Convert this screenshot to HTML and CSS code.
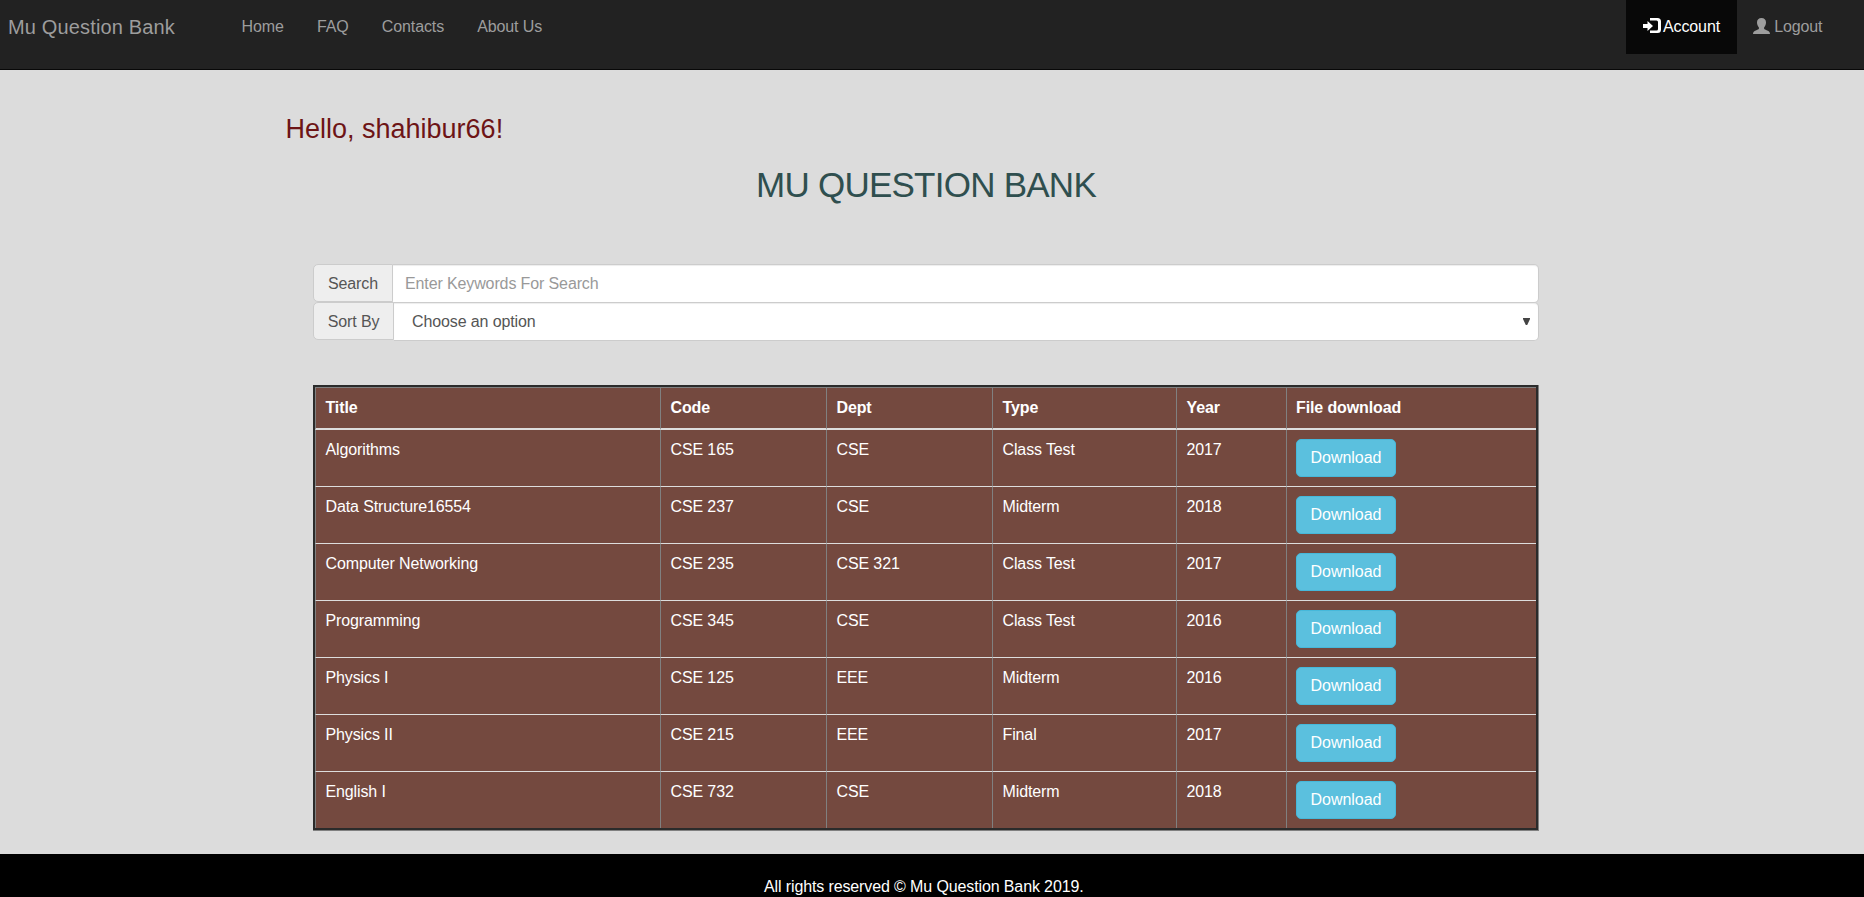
FILE: index.html
```html
<!DOCTYPE html>
<html lang="en">
<head>
<meta charset="utf-8">
<title>Mu Question Bank</title>
<link rel="stylesheet" href="styles.css">
</head>
<body>
<nav class="navbar">
  <a class="brand">Mu Question Bank</a>
  <ul class="menu">
    <li>Home</li><li>FAQ</li><li>Contacts</li><li>About Us</li>
  </ul>
  <ul class="menu menu-right">
    <li class="active"><svg class="icon-login" width="18" height="16" viewBox="0 0 18 16"><path fill="currentColor" d="M0 6h4.500V3L10 8l-5.500 5V10H0zM7 0h7.500a3.500 3.500 0 0 1 3.500 3.500v8a3.500 3.500 0 0 1-3.500 3.500H7v-2.500h6.500a1.500 1.500 0 0 0 1.500-1.500v-7A1.500 1.500 0 0 0 13.500 2.500H7z"/></svg>Account</li>
    <li><svg class="icon-user" width="17" height="16" viewBox="0 0 17 16"><path fill="currentColor" d="M8.500 0C11.300 0 13 1.700 13 4.200c0 1.900-.6 3.900-1.900 5.200v1.400c.3.700 1.500 1 3.100 1.700 1.700.7 2.800 1.400 2.800 3.500H0c0-2.100 1.100-2.800 2.800-3.500 1.600-.7 2.800-1 3.100-1.700V9.400C4.600 8.100 4 6.100 4 4.200 4 1.700 5.700 0 8.500 0z"/></svg>Logout</li>
  </ul>
</nav>
<main class="content">
  <h3 class="hello">Hello, shahibur66!</h3>
  <h1 class="title">MU QUESTION BANK</h1>
  <div class="group">
    <span class="addon">Search</span>
    <div class="control placeholder">Enter Keywords For Search</div>
  </div>
  <div class="group group-sort">
    <span class="addon">Sort By</span>
    <div class="control select"><span>Choose an option</span><svg width="7" height="7" viewBox="0 0 7 7"><path fill="#444" d="M0 0h7v1L4.200 7H2.800L0 1z"/></svg></div>
  </div>
  <div class="frame">
    <table class="files">
      <colgroup><col class="c1"><col class="c2"><col class="c2"><col class="c4"><col class="c5"><col></colgroup>
      <thead><tr><th>Title</th><th>Code</th><th>Dept</th><th>Type</th><th>Year</th><th>File download</th></tr></thead>
      <tbody>
        <tr><td>Algorithms</td><td>CSE 165</td><td>CSE</td><td>Class Test</td><td>2017</td><td><a class="btn">Download</a></td></tr>
        <tr><td>Data Structure16554</td><td>CSE 237</td><td>CSE</td><td>Midterm</td><td>2018</td><td><a class="btn">Download</a></td></tr>
        <tr><td>Computer Networking</td><td>CSE 235</td><td>CSE 321</td><td>Class Test</td><td>2017</td><td><a class="btn">Download</a></td></tr>
        <tr><td>Programming</td><td>CSE 345</td><td>CSE</td><td>Class Test</td><td>2016</td><td><a class="btn">Download</a></td></tr>
        <tr><td>Physics I</td><td>CSE 125</td><td>EEE</td><td>Midterm</td><td>2016</td><td><a class="btn">Download</a></td></tr>
        <tr><td>Physics II</td><td>CSE 215</td><td>EEE</td><td>Final</td><td>2017</td><td><a class="btn">Download</a></td></tr>
        <tr><td>English I</td><td>CSE 732</td><td>CSE</td><td>Midterm</td><td>2018</td><td><a class="btn">Download</a></td></tr>
      </tbody>
    </table>
  </div>
</main>
<footer class="footer"><span>All rights reserved © Mu Question Bank 2019.</span><div class="status"></div><div class="status status-small"></div></footer>
</body>
</html>
```
FILE: styles.css
```css
* { box-sizing: border-box; }
body {
  margin: 0; height: 897px; overflow: hidden;
  display: flex; flex-direction: column;
  background: #dcdcdc; color: #333;
  font: 16px/23px "Liberation Sans", Arial, sans-serif;
  letter-spacing: -0.12px;
}
.navbar {
  height: 70px; flex: none; display: flex; align-items: flex-start;
  background: #222; border-bottom: 1px solid #080808; color: #9d9d9d;
}
.brand { width: 225px; padding: 16px 0 0 8px; font-size: 20px; letter-spacing: 0.15px; }
.menu { list-style: none; display: flex; margin: 0; padding: 0; }
.menu li { height: 54px; padding: 15px 16.600px 0; white-space: nowrap; }
.menu-right { margin-left: auto; padding-right: 25px; }
.active { background: #080808; color: #fff; }
.menu-right svg { vertical-align: -2px; }
.icon-login { margin-right: 2px; }
.icon-user { margin-right: 4px; }
.content { flex: none; height: 784px; width: 1226px; margin-left: 313px; }
.hello { margin: 44px 0 0 -27.500px; font-size: 27px; line-height: 30px; font-weight: 400; color: #6d1416; letter-spacing: 0; }
.title { margin: 21px 0 0; font-size: 35px; line-height: 40px; font-weight: 400; color: #2f4f4f; text-align: center; letter-spacing: -0.75px; }
.group { display: flex; align-items: flex-start; margin-top: 59px; }
.group-sort { margin-top: -1px; }
.addon {
  width: 80px; height: 38px; flex: none; text-align: center; line-height: 37px; color: #555;
  background: #eee; border: 1px solid #ccc; border-radius: 5px 0 0 5px;
}
.group-sort .addon { width: 81px; }
.control {
  flex: 1; height: 39px; padding: 0 12px; line-height: 37px; color: #555; background: #fff;
  border: 1px solid #ccc; border-left: 0; border-radius: 0 5px 5px 0;
  box-shadow: inset 0 1px 1px rgba(0,0,0,.075);
}
.placeholder { color: #999; }
.select { display: flex; justify-content: space-between; align-items: center; padding: 0 8px 0 18px; }
.frame {
  margin-top: 44px; border: solid #808080; border-width: 0 1px 1px 0; width: 1226px;
}
.files {
  width: 1225px; table-layout: fixed; border-collapse: separate; border-spacing: 0;
  background: #74493f; border: 2px solid #2b2b2b; color: #fff;
}
.c1 { width: 346px; }
.c2 { width: 166px; }
.c4 { width: 184px; }
.c5 { width: 110px; }
.files th, .files td { text-align: left; vertical-align: top; padding: 9px 9px 9px 9.500px; border-right: 1px solid #808080; }
.files th:last-child, .files td:last-child { border-right: 0; padding-left: 9px; }
.files th:first-child, .files td:first-child { border-left: 1px solid #808080; }
.files th { height: 43px; padding-top: 8px; border-top: 1px solid #808080; border-bottom: 2px solid #ddd; }
.files td { height: 57px; line-height: 21px; border-bottom: 1px solid #ddd; }
.files tbody tr:last-child td { height: 56px; border-bottom: 0; }
.btn {
  display: block; width: 100px; height: 38px; line-height: 36px; text-align: center; letter-spacing: -0.05px;
  background: #5bc0de; border: 1px solid #46b8da; border-radius: 5px;
}
.footer { position: relative; flex: 1; background: #000; color: #fff; padding: 21px 0 0 764px; }
.status { position: absolute; left: 37px; bottom: 0; width: 430px; height: 1px; background: #c8c8c8; }
.status-small { left: 781px; width: 61px; background: #444; }
```
